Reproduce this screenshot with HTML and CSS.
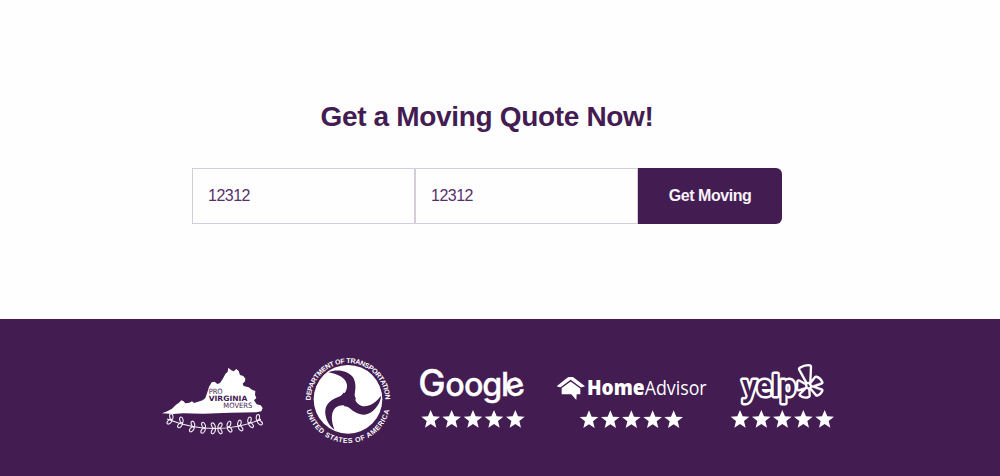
FILE: index.html
```
<!DOCTYPE html>
<html lang="en">
<head>
<meta charset="utf-8">
<title>Get a Moving Quote Now!</title>
<link rel="stylesheet" href="styles.css">
</head>
<body>
<main class="quote">
  <h1 class="quote-title">Get a Moving Quote Now!</h1>
  <form class="quote-form">
    <input class="field" type="text" value="12312" aria-label="Moving from">
    <input class="field" type="text" value="12312" aria-label="Moving to">
    <button class="submit" type="button">Get Moving</button>
  </form>
</main>
<footer class="partners">
  <svg class="logo logo-movers" viewBox="0 -6 390 315">
    <path class="white" d="M36 190L52 184 66 176 78 164 87 158 94 151 101 154 106 160 118 158 126 154 132 159 144 155 158 151 166 144 171 130 177 111 185 97 194 95 202 102 210 99 218 87 226 72 233 65 235 53 243 60 251 64 259 57 266 63 270 75 280 78 286 86 285 94 278 101 281 108 296 112 306 119 316 123 315 134 319 144 312 151 320 163 332 166 338 174 334 184 319 187 240 188 160 191 100 190 70 192z"/>
    <g class="movers-text">
      <text x="176" y="133" textLength="42" lengthAdjust="spacingAndGlyphs">PRO</text>
      <text class="bold" x="176" y="153" textLength="116" lengthAdjust="spacingAndGlyphs">VIRGINIA</text>
      <text x="220" y="173" textLength="87" lengthAdjust="spacingAndGlyphs">MOVERS</text>
    </g>
    <defs>
      <g id="sprig"><ellipse cx="-5" cy="-8" rx="5" ry="9" transform="rotate(-28 -5 -8)"/><ellipse cx="-5" cy="8" rx="5" ry="9" transform="rotate(28 -5 8)"/></g>
    </defs>
    <g class="vine">
      <path d="M51 207Q195 264 333 208"/>
      <use href="#sprig" transform="translate(66 209) rotate(20)"/>
      <use href="#sprig" transform="translate(97 219) rotate(15)"/>
      <use href="#sprig" transform="translate(132 231) rotate(12)"/>
      <use href="#sprig" transform="translate(165 234) rotate(5)"/>
      <use href="#sprig" transform="translate(195 235)"/>
      <use href="#sprig" transform="translate(205 235) rotate(180)"/>
      <use href="#sprig" transform="translate(233 231) rotate(172)"/>
      <use href="#sprig" transform="translate(265 228) rotate(168)"/>
      <use href="#sprig" transform="translate(296 219) rotate(163)"/>
      <use href="#sprig" transform="translate(322 212) rotate(158)"/>
    </g>
  </svg>
  <svg class="logo logo-dot" viewBox="0 0 315 315">
    <defs>
      <path id="arc-top" d="M47 157A112 112 0 0 1 271 157"/>
      <path id="arc-bottom" d="M31 157A128 128 0 0 0 287 157"/>
      <path id="blade" d="M100 73C125 62 160 68 174 88C186 108 180 130 179 140Q179 148 183 153L159 160 128 151C148 142 157 128 156 110C152 90 130 78 100 73z"/>
    </defs>
    <circle class="white" cx="159" cy="154" r="103"/>
    <g class="purple">
      <use href="#blade"/>
      <use href="#blade" transform="rotate(120 159 154)"/>
      <use href="#blade" transform="rotate(240 159 154)"/>
      <circle cx="159" cy="154" r="22"/>
    </g>
    <g class="seal-text">
      <text><textPath href="#arc-top" startOffset="0" textLength="350">DEPARTMENT OF TRANSPORTATION</textPath></text>
      <text><textPath href="#arc-bottom" startOffset="30" textLength="342">UNITED STATES OF AMERICA</textPath></text>
    </g>
  </svg>
  <svg class="logo logo-google" viewBox="0 -21 390 315">
    <defs><path id="star" d="M0-27L8-8 28-7 12 6 17 26 0 15-17 26-12 6-28-7-8-8z"/></defs>
    <text class="google-text" y="123" x="25 106 162 217 273"><tspan class="google-cap">G</tspan>oogl</text>
    <text class="google-text" transform="translate(293 128) rotate(-14)">e</text>
    <g class="white">
      <use href="#star" x="62" y="192"/><use href="#star" x="125" y="192"/><use href="#star" x="189" y="192"/><use href="#star" x="252" y="192"/><use href="#star" x="316" y="192"/>
    </g>
  </svg>
  <svg class="logo logo-advisor" viewBox="0 -36 525 315">
    <path class="white" d="M35 79L66 54Q69 51 74 51H84L120 79 106 83V103H95L94 120 79 103H50V83z"/>
    <path class="roof-line" d="M44 86L77 62 111 87"/>
    <text class="advisor-bold" x="126" y="104" textLength="173" lengthAdjust="spacingAndGlyphs">Home</text>
    <text class="advisor-light" x="299" y="104" textLength="186" lengthAdjust="spacingAndGlyphs">Advisor</text>
    <g class="white">
      <use href="#star" x="132" y="178"/><use href="#star" x="196" y="178"/><use href="#star" x="259" y="178"/><use href="#star" x="323" y="178"/><use href="#star" x="386" y="178"/>
    </g>
  </svg>
  <svg class="logo logo-yelp" viewBox="0 -21 390 315">
    <g class="halo">
      <text class="yelp-text" x="67" y="122" textLength="160" lengthAdjust="spacingAndGlyphs">yelp</text>
      <path id="burst" d="M241 42Q256 33 269 35L267 80 262 80zM236 80L255 91 255 96 235 102zM243 119L260 102 264 104 265 122Q254 127 243 119zM275 99L280 99 303 107Q298 116 291 118zM274 87L288 69Q298 72 303 82L278 91z"/>
    </g>
    <g class="purple">
      <text class="yelp-text" x="67" y="122" textLength="160" lengthAdjust="spacingAndGlyphs" aria-hidden="true">yelp</text>
      <use href="#burst" class="burst"/>
    </g>
    <g class="white">
      <use href="#star" x="60" y="192"/><use href="#star" x="124" y="192"/><use href="#star" x="187" y="192"/><use href="#star" x="250" y="192"/><use href="#star" x="314" y="192"/>
    </g>
  </svg>
</footer>
</body>
</html>
```
FILE: styles.css
```
* { box-sizing: border-box; }

body {
  margin: 0;
  height: 476px;
  display: flex;
  flex-direction: column;
  overflow: hidden;
  background: #fefefe;
  color: #431c52;
  font-family: "Liberation Sans", Arial, sans-serif;
}

.quote {
  height: 319px;
  padding: 100px 218px 0 192px;
}

.quote-title {
  margin: 0 0 34px;
  font-size: 28px;
  letter-spacing: -0.33px;
  line-height: 34px;
  text-align: center;
  white-space: nowrap;
}

.quote-form { display: flex; height: 56px; }

.field {
  width: 223px;
  padding: 0 15px 1px;
  border: 1px solid #d3ced8;
  border-radius: 0;
  background: transparent;
  color: #56306a;
  font: 16px "Liberation Sans", Arial, sans-serif;
  letter-spacing: -0.5px;
}

.submit {
  width: 144px;
  padding: 0 0 1px;
  border: 0;
  border-radius: 0 6px 6px 0;
  background: #431c52;
  color: #f7f2f8;
  font: bold 16px "Liberation Sans", Arial, sans-serif;
  letter-spacing: -0.45px;
}

.partners {
  flex: 1;
  display: flex;
  align-items: flex-start;
  padding: 29px 0 0 150px;
  background: #431c52;
}

.logo { flex: none; height: 105px; overflow: visible; }
.logo-movers { width: 130px; margin-right: 15px; }
.logo-dot { width: 105px; margin-right: 10px; }
.logo-google { width: 130px; margin-right: 5px; }
.logo-advisor { width: 175px; }
.logo-yelp { width: 130px; }

.white { fill: #fff; }
.purple { fill: #431c52; }

.movers-text { fill: #431c52; font: 22px "DejaVu Sans", sans-serif; }
.movers-text .bold { font-weight: bold; }
.vine { fill: none; stroke: #f4eff6; stroke-width: 3.2; }

.seal-text { fill: #fff; font: bold 21px "Liberation Sans", sans-serif; }

.google-text { fill: #fff; stroke: #fff; stroke-width: 1; font: 500 97px Inter, sans-serif; }
.google-cap { font-size: 110px; }

.roof-line { fill: none; stroke: #431c52; stroke-width: 4; }
.advisor-bold { fill: #fff; font: 800 61px "Open Sans", sans-serif; }
.advisor-light { fill: #fff; font: 400 61px "Open Sans", sans-serif; }

.halo { fill: #fff; stroke: #fff; stroke-width: 15; stroke-linejoin: round; }
.burst { stroke: #431c52; stroke-width: 1; }
.yelp-text { font: bold 85px "Open Sans", sans-serif; }
```
